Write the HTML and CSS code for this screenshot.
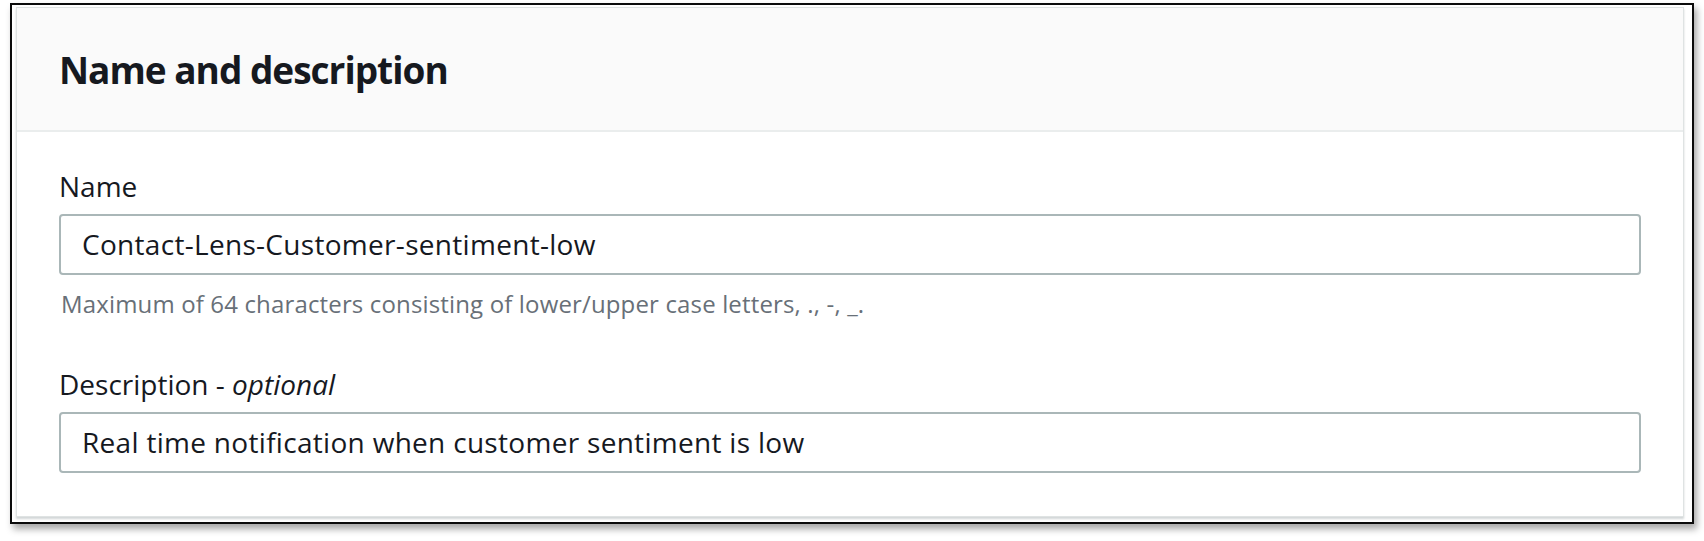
FILE: index.html
```html
<!DOCTYPE html>
<html lang="en">
<head>
<meta charset="utf-8">
<title>Name and description</title>
<link rel="stylesheet" href="styles.css">
</head>
<body>
<div class="frame">
  <section class="panel">
    <header class="panel-header">
      <h2 class="panel-title">Name and description</h2>
    </header>
    <div class="panel-body">
      <div class="field">
        <label class="field-label" for="name">Name</label>
        <div class="input" id="name">Contact-Lens-Customer-sentiment-low</div>
        <div class="field-hint">Maximum of 64 characters consisting of lower/upper case letters, ., -, _.</div>
      </div>
      <div class="field field-desc">
        <label class="field-label" for="desc">Description - <i>optional</i></label>
        <div class="input" id="desc">Real time notification when customer sentiment is low</div>
      </div>
    </div>
  </section>
</div>
</body>
</html>
```

FILE: styles.css
```css
* { box-sizing: border-box; }
html, body { margin: 0; padding: 0; background: #ffffff; }
body {
  font-family: "Open Sans", "Noto Sans", sans-serif;
  color: #16191f;
  width: 1704px;
  height: 541px;
  overflow: hidden;
}
.frame {
  margin: 3px 0 0 10px;
  width: 1684px;
  height: 521px;
  border: 2px solid #0b0b0b;
  padding: 2px 8px 5px 4px;
  box-shadow: 3px 5px 7px rgba(0, 0, 0, 0.35);
  background: #ffffff;
}
.panel {
  height: 100%;
  border: 1px solid #dfe3e3;
  box-shadow: 0 2px 2px rgba(0, 28, 36, 0.18);
  background: #ffffff;
  display: flex;
  flex-direction: column;
}
.panel-header {
  background: #fafafa;
  border-bottom: 2px solid #eaeded;
  height: 124px;
  padding: 37px 0 0 42px;
}
.panel-title {
  margin: 0;
  font-size: 37px;
  line-height: 50px;
  font-weight: 700;
  letter-spacing: -1px;
  color: #16191f;
}
.panel-body {
  padding: 34px 42px 0 42px;
}
.field-label {
  display: block;
  font-size: 28px;
  line-height: 40px;
  padding-left: 0;
  color: #16191f;
}
.field-label i { font-style: italic; }
.input {
  margin-top: 8px;
  height: 61px;
  border: 2px solid #aab7b8;
  border-radius: 4px;
  padding: 0 0 0 21px;
  font-size: 28px;
  line-height: 57px;
  letter-spacing: 0.3px;
  color: #16191f;
}
.field-hint {
  margin-top: 13px;
  padding-left: 2px;
  font-size: 24px;
  line-height: 32px;
  letter-spacing: 0.15px;
  color: #687078;
}
.field-desc { margin-top: 44px; }
```
